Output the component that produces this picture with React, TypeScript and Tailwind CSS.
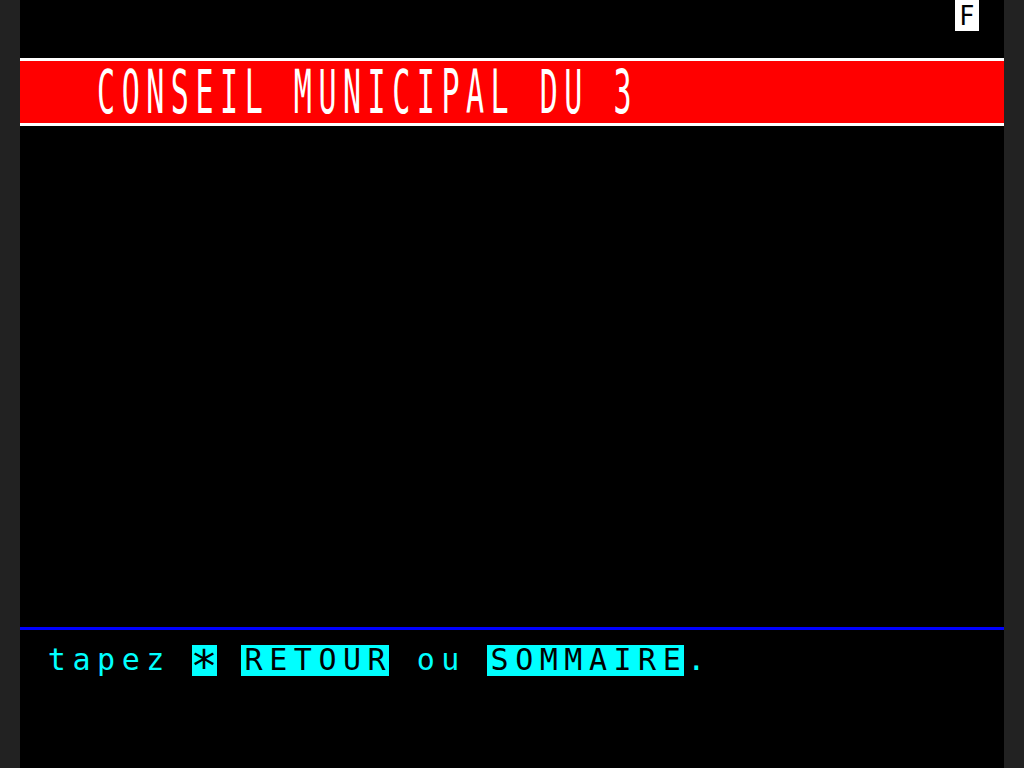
import React from 'react';

// one Minitel cell = 984/40 x 768/25
const Cells = ({ text, className = '' }: { text: string; className?: string }) => (
  <>
    {text.split('').map((c, i) => (
      <span key={i} className={`inline-block w-[24.6px] text-center ${className}`}>
        {c === ' ' ? '\u00a0' : c}
      </span>
    ))}
  </>
);

export default function App() {
  return (
    <div className="min-h-screen bg-[#222222] flex justify-center font-['DejaVu_Sans_Mono',monospace]">
      <div className="w-[984px] h-[768px] bg-black flex flex-col overflow-hidden">
        {/* ligne 0 : statut */}
        <div className="h-[30.72px] flex justify-end pr-[25px]">
          <div className="w-[24px] h-[31px] bg-white text-black flex items-center justify-center font-['DejaVu_Sans',sans-serif] text-[26px] leading-none">
            F
          </div>
        </div>

        {/* ligne 1 : filet blanc bas */}
        <div className="h-[30.72px] flex flex-col justify-end">
          <div className="h-[3px] bg-white" />
        </div>

        {/* lignes 2-3 : titre double hauteur */}
        <div className="h-[61.44px] bg-[#ff0000] pt-[2px]">
          <div className="h-[30.72px] leading-[30.72px] flex origin-top scale-y-200 pl-[73.8px] text-white text-[30px]">
            <Cells text="CONSEIL MUNICIPAL DU 3" />
          </div>
        </div>

        {/* ligne 4 : filet blanc haut */}
        <div className="h-[30.72px]">
          <div className="h-[3px] bg-white" />
        </div>

        {/* lignes 5-19 vides */}
        <div className="h-[460.8px]" />

        {/* ligne 20 : filet bleu */}
        <div className="h-[30.72px] pt-[12.6px]">
          <div className="h-[3px] bg-[#0000ff]" />
        </div>

        {/* ligne 21 : pied de page */}
        <div className="h-[30.72px] leading-[30.72px] flex pl-[24.6px] text-[30px] text-[#00ffff]">
          <Cells text="tapez " />
          <span className="inline-block w-[24.6px] text-center bg-[#00ffff] text-black">
            <span className="inline-block translate-y-[7px] scale-150">*</span>
          </span>
          <Cells text=" " />
          <Cells text="RETOUR" className="bg-[#00ffff] text-black" />
          <Cells text=" ou " />
          <Cells text="SOMMAIRE" className="bg-[#00ffff] text-black" />
          <Cells text="." />
        </div>

        <div className="flex-1" />
      </div>
    </div>
  );
}
